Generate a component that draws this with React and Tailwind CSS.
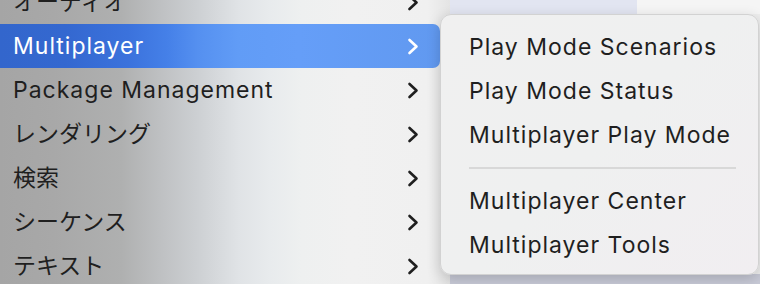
import React from "react";

const font = { fontFamily: '"Inter", "Noto Sans CJK JP", sans-serif' };

function Chevron({ white }) {
  return (
    <svg width="12" height="17" viewBox="0 0 12 17" fill="none" className="shrink-0">
      <path d="M2.5 2 L9.5 8.5 L2.5 15" stroke={white ? "#ffffff" : "#1f1f1f"} strokeWidth="2.6" strokeLinecap="round" strokeLinejoin="round" />
    </svg>
  );
}

const mainItems = [
  { t: "オーディオ", jp: true },
  { t: "Multiplayer" },
  { t: "Package Management" },
  { t: "レンダリング", jp: true },
  { t: "検索", jp: true },
  { t: "シーケンス", jp: true },
  { t: "テキスト", jp: true },
];

export default function App() {
  return (
    <div className="relative w-[760px] h-[284px] overflow-hidden flex" style={font}>
      <div className="w-[450px] h-full shrink-0 bg-[linear-gradient(90deg,#a5a5a5_0%,#a8a8a8_12%,#afb0b0_27%,#bfc1c3_36%,#cdd0d3_44%,#e0e3e6_53%,#e8ebed_60%,#eef0f0_67%,#f1f1f1_78%,#f0f0f0_95%,#e4e4e4_100%)]">
        <div className="-mt-[20px] flex flex-col">
          {mainItems.map(({ t, jp }) => {
            const active = t === "Multiplayer";
            return (
              <div
                key={t}
                className={
                  "h-[44px] w-[440px] flex items-center justify-between pl-[13px] pr-[21px] rounded-r-[7px] text-[23px] " +
                  (active
                    ? "text-white bg-[linear-gradient(90deg,#3366cc_0%,#3468d0_15%,#3b72dc_29%,#4580e8_38%,#5590f0_45%,#619cf6_54%,#659ef8_68%,#6199f0_100%)]"
                    : "text-[#1f1f1f]")
                }
              >
                <span className={"leading-none " + (jp ? "" : "tracking-[1px]")}>{t}</span>
                <Chevron white={active} />
              </div>
            );
          })}
        </div>
      </div>
      <div className="flex-1 flex flex-col">
        <div className="h-[14px] flex">
          <div className="w-[187px] bg-[#e2e5f1]" />
          <div className="flex-1 bg-[#f5f5f5]" />
        </div>
        <div className="flex-1 bg-[#eeeeee]" />
        <div className="h-[10px] bg-[#c8cad7]" />
      </div>

      <div className="absolute left-[440px] top-[14px] w-[319px] h-[261px] rounded-[11px] border border-[#d2d2d2] bg-[linear-gradient(135deg,#f0f0f0_0%,#eff0f0_50%,#f1eef1_100%)] shadow-[0_4px_14px_rgba(0,0,0,0.18)] pt-[10px] pl-[28px] pr-[22px] flex flex-col text-[23px] tracking-[1px] text-[#1f1f1f]">
        <div className="h-[44px] flex items-center">Play Mode Scenarios</div>
        <div className="h-[44px] flex items-center">Play Mode Status</div>
        <div className="h-[44px] flex items-center">Multiplayer Play Mode</div>
        <div className="h-[22px] flex items-center">
          <div className="h-[2px] w-full bg-[#d8d8d8]" />
        </div>
        <div className="h-[44px] flex items-center">Multiplayer Center</div>
        <div className="h-[44px] flex items-center">Multiplayer Tools</div>
      </div>
    </div>
  );
}
